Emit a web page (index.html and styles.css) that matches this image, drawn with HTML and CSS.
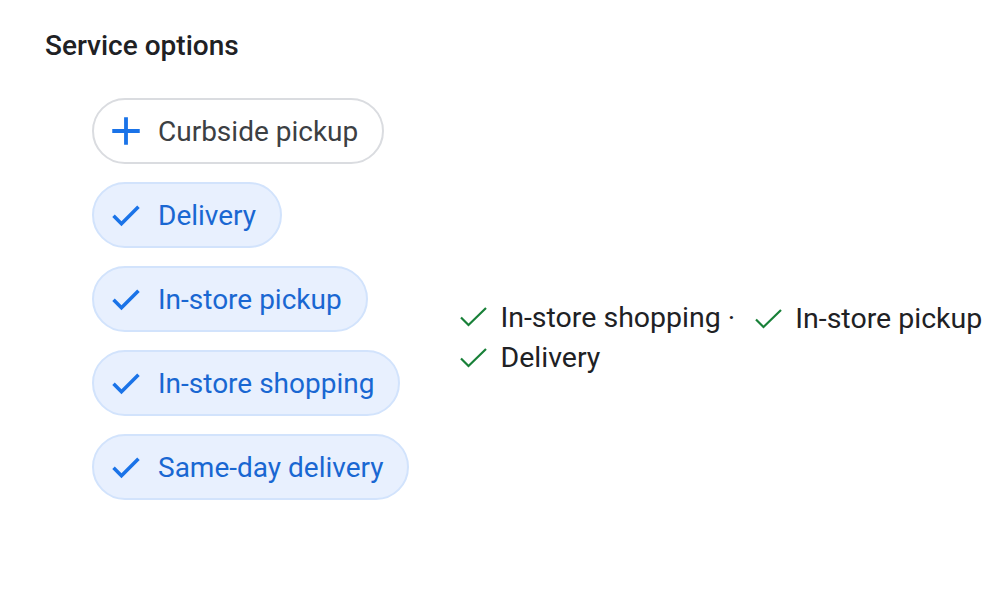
FILE: index.html
```html
<!DOCTYPE html>
<html lang="en">
<head>
    <meta charset="UTF-8">
    <title>Service options</title>
    <link rel="stylesheet" href="styles.css">
</head>
<body>
    <h2 class="title">Service options</h2>

    <div class="layout">
        <div class="chips">
            <div class="chip">
                <svg class="chip-icon" viewBox="0 0 24 24"><path d="M12 2.3v19.4M2.3 12h19.4" stroke="#1a73e8" stroke-width="2.7" fill="none"/></svg>
                <span>Curbside pickup</span>
            </div>
            <div class="chip selected">
                <svg class="chip-icon" viewBox="0 0 24 24"><path d="M3.2 12.6l5.6 5.6L20.8 6.2" stroke="#1a73e8" stroke-width="2.5" fill="none"/></svg>
                <span>Delivery</span>
            </div>
            <div class="chip selected">
                <svg class="chip-icon" viewBox="0 0 24 24"><path d="M3.2 12.6l5.6 5.6L20.8 6.2" stroke="#1a73e8" stroke-width="2.5" fill="none"/></svg>
                <span>In-store pickup</span>
            </div>
            <div class="chip selected">
                <svg class="chip-icon" viewBox="0 0 24 24"><path d="M3.2 12.6l5.6 5.6L20.8 6.2" stroke="#1a73e8" stroke-width="2.5" fill="none"/></svg>
                <span>In-store shopping</span>
            </div>
            <div class="chip selected">
                <svg class="chip-icon" viewBox="0 0 24 24"><path d="M3.2 12.6l5.6 5.6L20.8 6.2" stroke="#1a73e8" stroke-width="2.5" fill="none"/></svg>
                <span>Same-day delivery</span>
            </div>
        </div>

        <!-- preview of how options show on the profile -->
        <div class="preview">
            <span class="item">
                <svg class="check" viewBox="0 0 27 20"><path d="M1 10.5l7.5 7.5L26 1" stroke="#188038" stroke-width="2.2" fill="none"/></svg>
                In-store shopping ·
            </span>
            <span class="item second">
                <svg class="check" viewBox="0 0 27 20"><path d="M1 10.5l7.5 7.5L26 1" stroke="#188038" stroke-width="2.2" fill="none"/></svg>
                In-store pickup
            </span>
            <span class="item">
                <svg class="check" viewBox="0 0 27 20"><path d="M1 10.5l7.5 7.5L26 1" stroke="#188038" stroke-width="2.2" fill="none"/></svg>
                Delivery
            </span>
        </div>
    </div>
</body>
</html>
```

FILE: styles.css
```css
body {
    margin: 0;
    padding: 28px 0 0 45px;
    font-family: Roboto, "Noto Sans", sans-serif;
    background: #fff;
}
.title {
    margin: 0;
    font-size: 28px;
    font-weight: 500;
    line-height: 36px;
    color: #202124;
}
.layout {
    display: flex;
    align-items: flex-start;
    margin-top: 34px;
    margin-left: 47px;
}
.chips {
    display: flex;
    flex-direction: column;
    align-items: flex-start;
    flex-shrink: 0;
    gap: 18px;
}
.chip {
    display: flex;
    align-items: center;
    height: 66px;
    box-sizing: border-box;
    padding: 0 24px 0 15px;
    border: 2px solid #dadce0;
    border-radius: 33px;
    font-size: 28px;
    white-space: nowrap;
    color: #3c4043;
}
.chip.selected {
    background-color: #e8f0fe;
    border-color: #d2e3fc;
    color: #1967d2;
}
.chip-icon {
    width: 34px;
    height: 34px;
    margin-right: 15px;
}
.preview {
    display: flex;
    flex-wrap: wrap;
    flex-shrink: 0;
    column-gap: 20px;
    width: 530px;
    margin-left: 51px;
    margin-top: 198px;
    font-size: 28.5px;
    line-height: 39px;
    color: #202124;
}
.item {
    display: inline-flex;
    align-items: center;
    white-space: nowrap;
}
.item.second {
    margin-top: 3px;
}
.check {
    width: 27px;
    height: 20px;
    margin-right: 13px;
}
```
